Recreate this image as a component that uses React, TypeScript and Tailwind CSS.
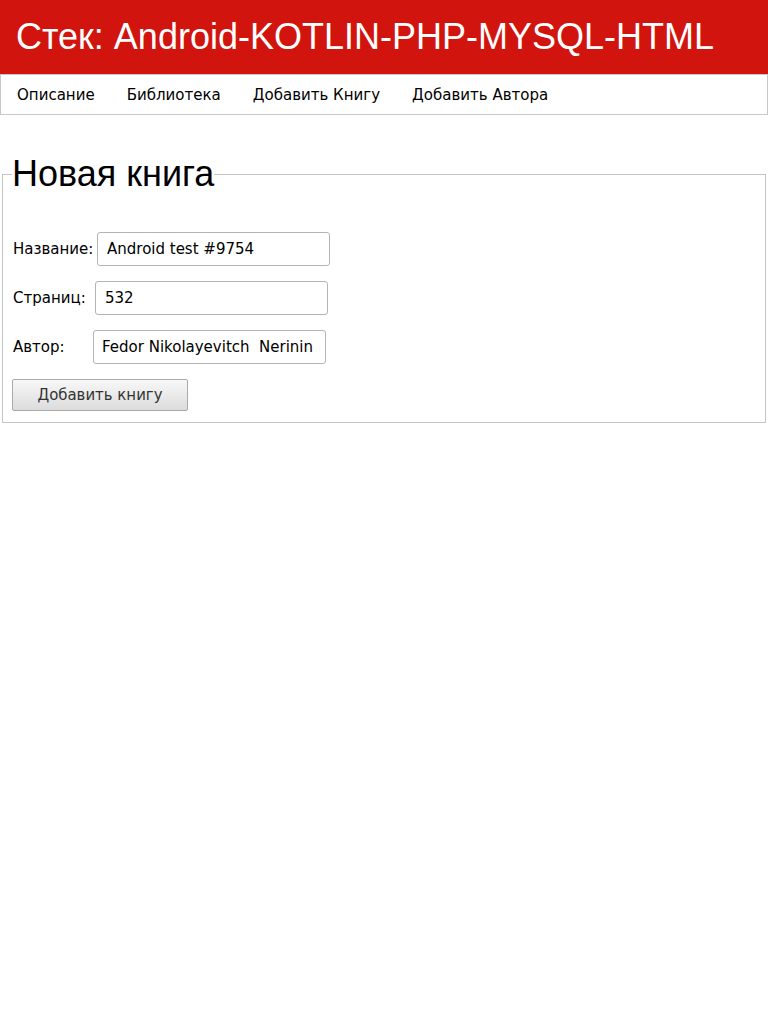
import React from 'react'

const dv = { fontFamily: '"DejaVu Sans", Verdana, sans-serif' }
const cond = { fontFamily: '"DejaVu Sans Condensed", "DejaVu Sans", sans-serif' }
const arial = { fontFamily: '"Liberation Sans", Arial, sans-serif' }

const App = () => {
  return (
    <div className="min-h-screen bg-white text-black" style={dv}>
      <div className="bg-[#d1140d] h-[74px] flex items-center px-4">
        <h1 className="text-white text-[36px] leading-none" style={arial}>
          Стек: Android-KOTLIN-PHP-MYSQL-HTML
        </h1>
      </div>

      <div className="border border-[#c8c8c8] h-[41px] flex items-center pt-px">
        <ul className="flex text-[16.7px]" style={cond}>
          <li className="px-4 cursor-pointer">Описание</li>
          <li className="px-4 cursor-pointer">Библиотека</li>
          <li className="px-4 cursor-pointer">Добавить Книгу</li>
          <li className="px-4 cursor-pointer">Добавить Автора</li>
        </ul>
      </div>

      <fieldset className="mx-[2px] mt-[39px] border border-[#c4c4c4] px-[9px] pb-[11px]">
        <legend className="text-[36px] leading-[40px]" style={arial}>Новая книга</legend>

        <div className="flex flex-col gap-[15px] mt-[38px] text-[15px]">
          <div className="flex items-center">
            <label className="w-[85px] pl-px">Название:</label>
            <input
              className="w-[233px] h-[34px] border border-[#b4b4b4] rounded-[3px] px-[9px] text-[15px] outline-none"
              defaultValue="Android test #9754"
            />
          </div>
          <div className="flex items-center">
            <label className="w-[83px] pl-px">Страниц:</label>
            <input
              className="w-[233px] h-[34px] border border-[#b4b4b4] rounded-[3px] px-[9px] text-[15px] outline-none"
              defaultValue="532"
            />
          </div>
          <div className="flex items-center">
            <label className="w-[81px] pl-px">Автор:</label>
            <input
              className="w-[233px] h-[34px] border border-[#b4b4b4] rounded-[3px] px-[8px] text-[15px] outline-none"
              defaultValue="Fedor Nikolayevitch  Nerinin"
            />
          </div>
          <div>
            <button
              className="w-[176px] h-[32px] border border-[#aaaaaa] rounded-[2px] bg-gradient-to-b from-[#f8f8f8] to-[#dcdcdc] text-[#333] text-[16.6px]"
              style={cond}
            >
              Добавить книгу
            </button>
          </div>
        </div>
      </fieldset>
    </div>
  )
}

export default App
